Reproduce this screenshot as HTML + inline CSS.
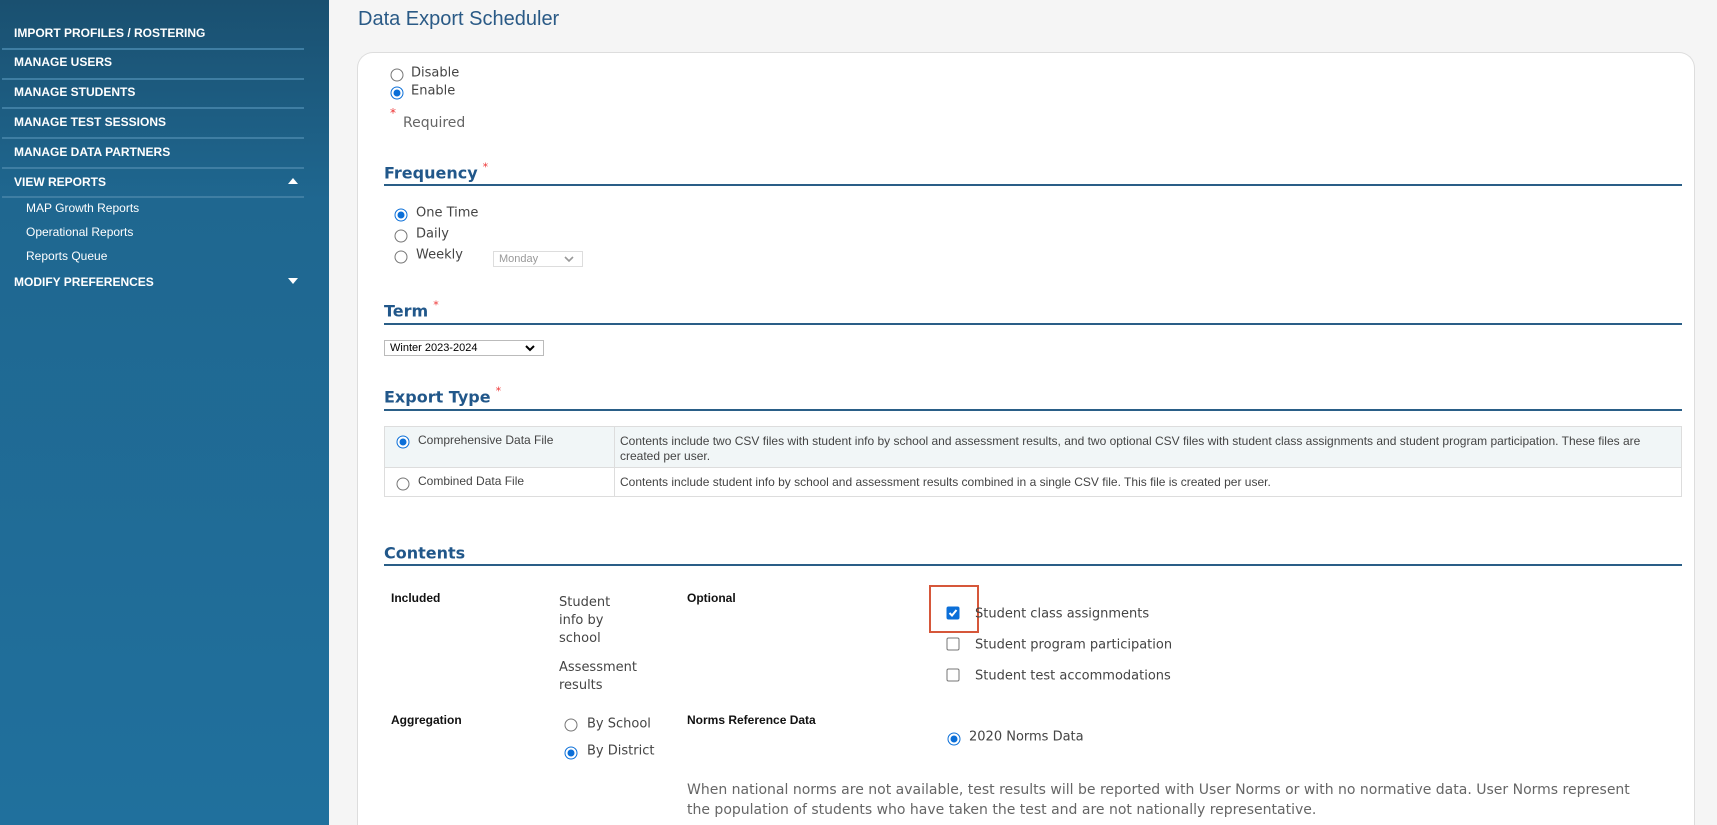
<!DOCTYPE html>
<html style="overflow:hidden;height:825px"><head><meta charset="utf-8"><style>
*{margin:0;padding:0;box-sizing:border-box}
body{width:1717px;height:825px;overflow:hidden;background:#f5f5f5;font-family:"DejaVu Sans",Verdana,sans-serif;position:relative}
.a{position:absolute;white-space:nowrap}
#sb{position:absolute;left:0;top:0;width:329px;height:825px;background:linear-gradient(#1a5070 0px,#1f6790 200px,#20709d 825px)}
.nav{position:absolute;left:14px;color:#fff;font:bold 12px "Liberation Sans",Arial,sans-serif;transform:translateY(-50%)}
.sub{position:absolute;left:26px;color:#fff;font:12px "Liberation Sans",Arial,sans-serif;transform:translateY(-50%)}
.ln{position:absolute;left:2px;width:302px;height:2px;background:#3f7ea3}
.tri{position:absolute;left:288px;width:0;height:0;border-left:5px solid transparent;border-right:5px solid transparent}
#card{position:absolute;left:357px;top:52px;width:1338px;height:773px;background:#fff;border:1px solid #ddd;border-bottom:none;border-radius:16px 16px 0 0}
.rad{position:absolute;width:13px;height:13px;border-radius:50%;border:1px solid #767676;background:#fff;transform:translate(-50%,-50%)}
.rad.on{border:1px solid #0b6fd8}
.rad.on::after{content:"";position:absolute;left:2px;top:2px;width:7px;height:7px;border-radius:50%;background:#0b6fd8}
.lbl{position:absolute;font-size:13px;color:#444;transform:translateY(-50%);white-space:nowrap}
.h{position:absolute;left:384px;font:bold 16px "DejaVu Sans",Verdana,sans-serif;color:#21578a;transform:translateY(-50%)}
.st{color:#e33;font-size:11px;position:relative;top:-8px;margin-left:5px;font-weight:normal}
.ul{position:absolute;left:384px;width:1298px;height:2px;background:#2a5e87}
.cb{position:absolute;width:13px;height:13px;border:1px solid #767676;border-radius:2px;background:#fff;transform:translate(-50%,-50%)}
.b{position:absolute;font:bold 12px "Liberation Sans",Arial,sans-serif;color:#111;transform:translateY(-50%)}
td{font:12px "Liberation Sans",Arial,sans-serif;color:#444;vertical-align:top;border:1px solid #ddd}
</style></head><body>
<div id="sb">
<div class="nav" style="top:33px">IMPORT PROFILES / ROSTERING</div><div class="ln" style="top:48px"></div>
<div class="nav" style="top:62px">MANAGE USERS</div><div class="ln" style="top:78px"></div>
<div class="nav" style="top:92px">MANAGE STUDENTS</div><div class="ln" style="top:107px"></div>
<div class="nav" style="top:122px">MANAGE TEST SESSIONS</div><div class="ln" style="top:137px"></div>
<div class="nav" style="top:152px">MANAGE DATA PARTNERS</div><div class="ln" style="top:167px"></div>
<div class="nav" style="top:182px">VIEW REPORTS</div><div class="tri" style="top:178px;border-bottom:6px solid #fff"></div><div class="ln" style="top:196px"></div>
<div class="sub" style="top:208px">MAP Growth Reports</div>
<div class="sub" style="top:232px">Operational Reports</div>
<div class="sub" style="top:256px">Reports Queue</div>
<div class="nav" style="top:282px">MODIFY PREFERENCES</div><div class="tri" style="top:278px;border-top:6px solid #fff"></div>
</div>
<div class="a" style="left:358px;top:8px;font:20px 'Liberation Sans',Arial,sans-serif;color:#2a5a86">Data Export Scheduler</div>
<div id="card"></div>
<div class="rad" style="left:397px;top:75px"></div><div class="lbl" style="left:411px;top:73px">Disable</div>
<div class="rad on" style="left:397px;top:93px"></div><div class="lbl" style="left:411px;top:91px">Enable</div>
<div class="a" style="left:390px;top:106px;color:#e33;font-size:12px">*</div>
<div class="lbl" style="left:403px;top:123px;font-size:14px;color:#666">Required</div>

<div class="h" style="top:173px">Frequency<span class="st">*</span></div><div class="ul" style="top:184px"></div>
<div class="rad on" style="left:401px;top:215px"></div><div class="lbl" style="left:416px;top:213px">One Time</div>
<div class="rad" style="left:401px;top:236px"></div><div class="lbl" style="left:416px;top:234px">Daily</div>
<div class="rad" style="left:401px;top:257px"></div><div class="lbl" style="left:416px;top:255px">Weekly</div>
<div class="a" style="left:493px;top:251px;width:90px;height:16px;border:1px solid #ddd;font:11px 'Liberation Sans',Arial;color:#999;padding:1px 0 0 5px">Monday<svg style="position:absolute;right:8px;top:4px" width="10" height="7"><path d="M1 1L5 5L9 1" stroke="#999" stroke-width="1.6" fill="none"/></svg></div>

<div class="h" style="top:311px">Term<span class="st">*</span></div><div class="ul" style="top:323px"></div>
<div class="a" style="left:384px;top:340px;width:160px;height:16px;border:1px solid #bbb;font:11px 'Liberation Sans',Arial;color:#000;padding:1px 0 0 5px">Winter 2023-2024<svg style="position:absolute;right:8px;top:4px" width="10" height="7"><path d="M1 1L5 5L9 1" stroke="#000" stroke-width="2" fill="none"/></svg></div>

<div class="h" style="top:397px">Export Type<span class="st">*</span></div><div class="ul" style="top:409px"></div>
<table style="position:absolute;left:384px;top:426px;width:1298px;border-collapse:collapse">
<tr style="background:#f1f6f7;height:41px"><td style="width:230px;padding:6px 0 0 33px;position:relative"><div class="rad on" style="left:18px;top:15px"></div>Comprehensive Data File</td><td style="padding:7px 5px 0 5px;line-height:15px">Contents include two CSV files with student info by school and assessment results, and two optional CSV files with student class assignments and student program participation. These files are created per user.</td></tr>
<tr style="height:29px"><td style="padding:6px 0 0 33px;position:relative"><div class="rad" style="left:18px;top:16px"></div>Combined Data File</td><td style="padding:7px 5px 0 5px">Contents include student info by school and assessment results combined in a single CSV file. This file is created per user.</td></tr>
</table>

<div class="h" style="top:553px">Contents</div><div class="ul" style="top:564px"></div>
<div class="b" style="left:391px;top:598px">Included</div>
<div class="a" style="left:559px;top:594px;font-size:13px;color:#444;line-height:18px">Student<br>info by<br>school</div>
<div class="a" style="left:559px;top:659px;font-size:13px;color:#444;line-height:18px">Assessment<br>results</div>
<div class="b" style="left:687px;top:598px">Optional</div>
<div class="a" style="left:929px;top:585px;width:50px;height:48px;border:2px solid #d6573a"></div>
<div class="cb" style="left:953px;top:613px;background:#0b6fd8;border-color:#0b6fd8"><svg width="11" height="11" style="position:absolute;left:0;top:0"><path d="M2 5.5L4.5 8L9 2.5" stroke="#fff" stroke-width="2" fill="none"/></svg></div>
<div class="lbl" style="left:975px;top:614px">Student class assignments</div>
<div class="cb" style="left:953px;top:644px"></div><div class="lbl" style="left:975px;top:645px">Student program participation</div>
<div class="cb" style="left:953px;top:675px"></div><div class="lbl" style="left:975px;top:676px">Student test accommodations</div>

<div class="b" style="left:391px;top:720px">Aggregation</div>
<div class="rad" style="left:571px;top:725px"></div><div class="lbl" style="left:587px;top:724px">By School</div>
<div class="rad on" style="left:571px;top:753px"></div><div class="lbl" style="left:587px;top:751px">By District</div>
<div class="b" style="left:687px;top:720px">Norms Reference Data</div>
<div class="rad on" style="left:954px;top:739px"></div><div class="lbl" style="left:969px;top:737px">2020 Norms Data</div>
<div class="a" style="left:687px;top:780px;font-size:14px;color:#666;line-height:20px">When national norms are not available, test results will be reported with User Norms or with no normative data. User Norms represent<br>the population of students who have taken the test and are not nationally representative.</div>
</body></html>
